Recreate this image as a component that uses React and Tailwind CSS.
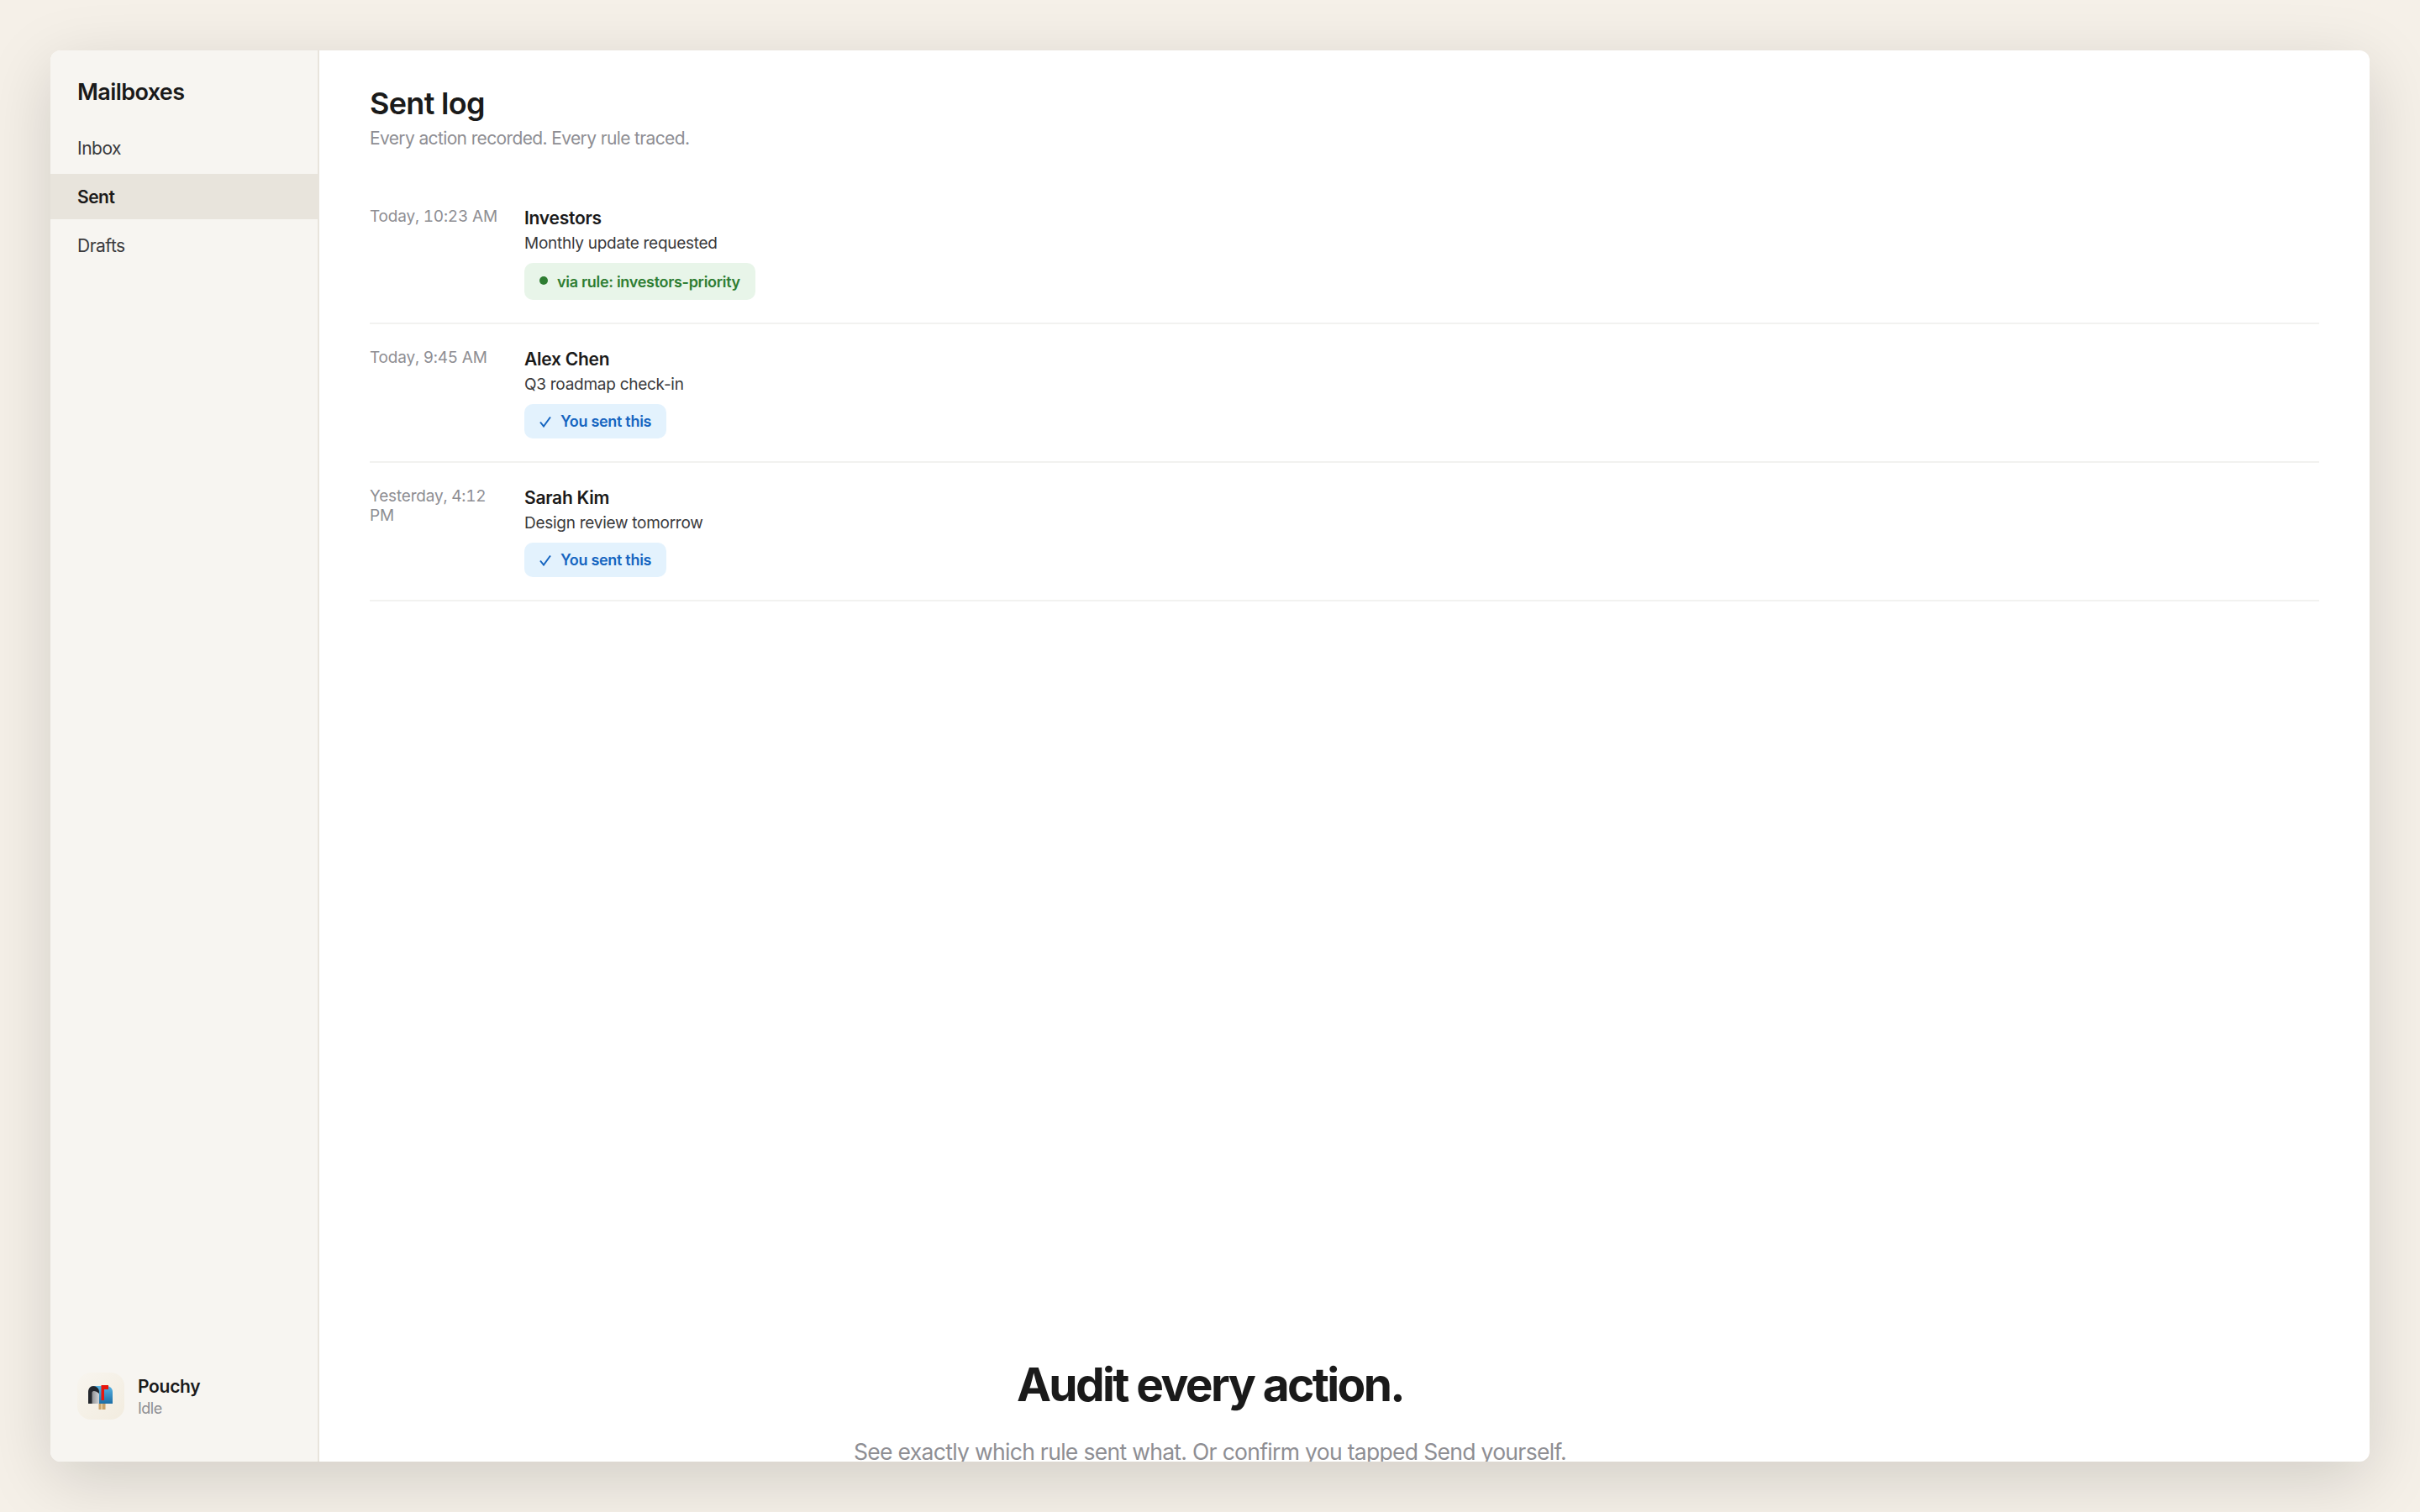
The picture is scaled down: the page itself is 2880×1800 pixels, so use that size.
import React from 'react';

const LOG = [
  { time: 'Today, 10:23 AM', name: 'Investors', subject: 'Monthly update requested', rule: 'investors-priority' },
  { time: 'Today, 9:45 AM', name: 'Alex Chen', subject: 'Q3 roadmap check-in' },
  { time: 'Yesterday, 4:12 PM', name: 'Sarah Kim', subject: 'Design review tomorrow' },
];

function MailboxIcon() {
  return (
    <svg width="32" height="32" viewBox="14 15 32 32">
      <defs>
        <linearGradient id="box" x1="0" y1="0" x2="0" y2="1">
          <stop offset="0" stopColor="#58b4e4" />
          <stop offset="1" stopColor="#1c6ea6" />
        </linearGradient>
        <linearGradient id="door" x1="0" y1="0" x2="1" y2="0">
          <stop offset="0" stopColor="#8f9194" />
          <stop offset="1" stopColor="#d2d4d6" />
        </linearGradient>
      </defs>
      <rect x="27.500" y="39" width="8" height="8" fill="#c9a36a" />
      <rect x="30" y="39" width="2" height="8" fill="#e3c796" />
      <path d="M22 19h15c4 0 7 3 7 7v14H22z" fill="url(#box)" />
      <path d="M15 40V26c0-4 2.500-7 6-7s7 3 7 7v14z" fill="#23262c" />
      <path d="M19.500 40V27c0-1 .800-2 2-2s6.500 1.500 6.500 4v11z" fill="url(#door)" />
      <path d="M30.500 18H39v5h-5v13h-3.500z" fill="#e8160c" />
    </svg>
  );
}

function Badge({ rule }) {
  if (rule) {
    return (
      <div className="inline-flex h-[44px] items-center gap-[11px] rounded-[10px] bg-[#e8f5e9] px-[18px] text-[18px] font-semibold tracking-[-0.3px] text-[#2e7d32]">
        <span className="mb-[2px] size-[10px] rounded-full bg-[#2e7d32]" />
        <span>via rule: {rule}</span>
      </div>
    );
  }
  return (
    <div className="inline-flex h-[41px] items-center gap-[11px] rounded-[10px] bg-[#e3f2fd] px-[18px] text-[18px] font-semibold tracking-[-0.3px] text-[#1565c0]">
      <svg width="14" height="14" viewBox="0 0 14 14" fill="none" stroke="currentColor" strokeWidth="2">
        <path d="M1 7.500l4 5L13 1.500" />
      </svg>
      <span>You sent this</span>
    </div>
  );
}

function LogRow({ item }) {
  return (
    <div className="flex gap-[24px] border-b-2 border-[#f2f2f0] pt-[24px] pb-[27px]">
      <div className="w-[160px] shrink-0 pt-[4px] text-[19px] leading-[23px] tracking-[-0.2px] tabular-nums text-[#8e8e93]">{item.time}</div>
      <div>
        <div className="text-[21px] leading-[36px] font-semibold tracking-[-0.25px] text-[#1a1a1a]">{item.name}</div>
        <div className="mb-[11px] text-[19px] leading-[24px] tracking-[-0.27px] text-[#3a3a3c]">{item.subject}</div>
        <Badge rule={item.rule} />
      </div>
    </div>
  );
}

export default function App() {
  return (
    <div className="h-[1800px] overflow-hidden bg-[#f5f0e8] p-[60px] font-['Inter',sans-serif]">
      <div className="relative flex h-[1680px] overflow-hidden rounded-[12px] bg-white shadow-[0_20px_80px_rgba(0,0,0,0.15)]">
        <aside className="flex w-[320px] shrink-0 flex-col border-r-2 border-[#e8e4dc] bg-[#f7f5f1]">
          <div className="px-[32px] pt-[32px] pb-[21px] text-[27px] leading-[36px] font-semibold tracking-[-0.6px] text-[#1a1a1a]">Mailboxes</div>
          <nav className="flex flex-col gap-[4px]">
            <div className="flex h-[54px] items-center px-[32px] pt-[2px] text-[21px] tracking-[-0.5px] text-[#3a3a3c]">Inbox</div>
            <div className="flex h-[54px] items-center bg-[#e8e4dc] px-[32px] pt-[2px] text-[21px] font-semibold tracking-[-0.5px] text-[#1a1a1a]">Sent</div>
            <div className="flex h-[54px] items-center px-[32px] pt-[2px] text-[21px] tracking-[-0.5px] text-[#3a3a3c]">Drafts</div>
          </nav>
          <div className="mt-auto flex items-center gap-[16px] px-[32px] pb-[50px]">
            <div className="flex size-[56px] items-center justify-center rounded-[16px] bg-gradient-to-br from-[#f8f5ef] to-[#f2ecdf]">
              <MailboxIcon />
            </div>
            <div>
              <div className="text-[21px] leading-[28px] font-semibold tracking-[-0.3px] text-[#1a1a1a]">Pouchy</div>
              <div className="mt-[1px] text-[18px] leading-[22px] tracking-[-0.5px] text-[#8e8e93]">Idle</div>
            </div>
          </div>
        </aside>
        <main className="flex-1 px-[60px] pt-[43px]">
          <h1 className="text-[36px] leading-[40px] font-semibold tracking-[-0.7px] text-[#1a1a1a]">Sent log</h1>
          <p className="mt-[8px] mb-[39px] text-[21px] leading-[28px] tracking-[-0.63px] text-[#8e8e93]">Every action recorded. Every rule traced.</p>
          {LOG.map((item) => (
            <LogRow key={item.name} item={item} />
          ))}
        </main>
        <div className="absolute inset-x-0 bottom-[-8px] text-center">
          <h2 className="text-[55px] leading-[68px] font-bold tracking-[-2.6px] text-[#1a1a1a]">Audit every action.</h2>
          <p className="mt-[26px] text-[26.500px] leading-[40px] tracking-[-0.69px] text-[#8e8e93]">See exactly which rule sent what. Or confirm you tapped Send yourself.</p>
        </div>
      </div>
    </div>
  );
}
